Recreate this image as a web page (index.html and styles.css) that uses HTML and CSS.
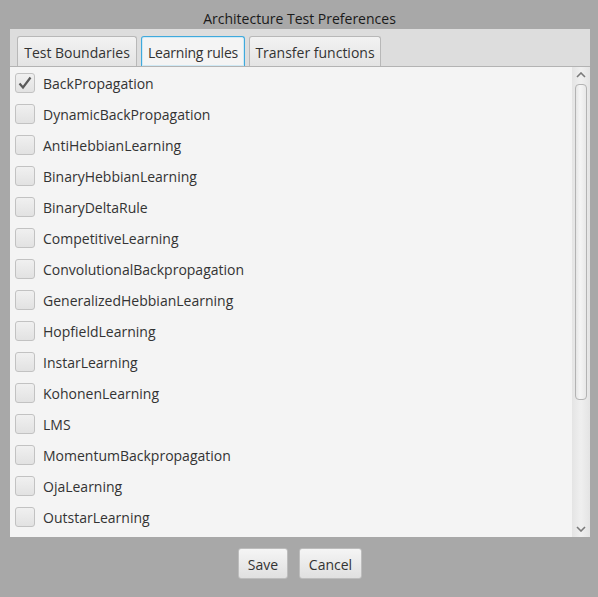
FILE: index.html
```html
<!DOCTYPE html>
<html>
<head>
<meta charset="utf-8">
<link rel="stylesheet" href="styles.css">
</head>
<body>
<div class="title">Architecture Test Preferences</div>
<div class="panel">
  <div class="tabbar">
    <div class="tab t1">Test Boundaries</div>
    <div class="tab t2 selected">Learning rules</div>
    <div class="tab t3">Transfer functions</div>
  </div>
  <div class="content">
    <div class="list">
      <div class="row"><span class="box checked"><svg width="20" height="20" viewBox="0 0 20 20"><path d="M4.5 10.5 L8 14.5 L15.5 4.5" fill="none" stroke="#5a5a5a" stroke-width="2.2" stroke-linejoin="miter"/></svg></span><span class="label">BackPropagation</span></div>
      <div class="row"><span class="box"></span><span class="label">DynamicBackPropagation</span></div>
      <div class="row"><span class="box"></span><span class="label">AntiHebbianLearning</span></div>
      <div class="row"><span class="box"></span><span class="label">BinaryHebbianLearning</span></div>
      <div class="row"><span class="box"></span><span class="label">BinaryDeltaRule</span></div>
      <div class="row"><span class="box"></span><span class="label">CompetitiveLearning</span></div>
      <div class="row"><span class="box"></span><span class="label">ConvolutionalBackpropagation</span></div>
      <div class="row"><span class="box"></span><span class="label">GeneralizedHebbianLearning</span></div>
      <div class="row"><span class="box"></span><span class="label">HopfieldLearning</span></div>
      <div class="row"><span class="box"></span><span class="label">InstarLearning</span></div>
      <div class="row"><span class="box"></span><span class="label">KohonenLearning</span></div>
      <div class="row"><span class="box"></span><span class="label">LMS</span></div>
      <div class="row"><span class="box"></span><span class="label">MomentumBackpropagation</span></div>
      <div class="row"><span class="box"></span><span class="label">OjaLearning</span></div>
      <div class="row"><span class="box"></span><span class="label">OutstarLearning</span></div>
    </div>
    <div class="scrollbar">
      <div class="arrow up"><svg width="10" height="6" viewBox="0 0 10 6"><path d="M1 5 L5 1 L9 5" fill="none" stroke="#7a7a7a" stroke-width="1.6"/></svg></div>
      <div class="track"><div class="thumb"></div></div>
      <div class="arrow down"><svg width="10" height="6" viewBox="0 0 10 6"><path d="M1 1 L5 5 L9 1" fill="none" stroke="#7a7a7a" stroke-width="1.6"/></svg></div>
    </div>
  </div>
</div>
<div class="buttons">
  <div class="btn save">Save</div>
  <div class="btn cancel">Cancel</div>
</div>
</body>
</html>
```
FILE: styles.css
```css
html, body {
  margin: 0;
  padding: 0;
}
body {
  background: #a8a8a8;
  width: 598px;
  height: 597px;
  font-family: "Open Sans", "Noto Sans", sans-serif;
  font-size: 14px;
  color: #333;
  overflow: hidden;
}
.title {
  box-sizing: border-box;
  height: 29px;
  padding-top: 9px;
  line-height: 20px;
  text-align: center;
  color: #1a1a1a;
  margin-left: 1px;
}
.panel {
  margin-left: 10px;
  width: 580px;
}
.tabbar {
  height: 38px;
  background: #dddddd;
  border-bottom: 1px solid #b3b3b3;
  box-sizing: border-box;
  display: flex;
  align-items: flex-end;
  padding-left: 7px;
  gap: 4px;
}
.tab {
  height: 30px;
  box-sizing: border-box;
  border: 1px solid #b8b8b8;
  border-bottom: none;
  border-radius: 3px 3px 0 0;
  background: linear-gradient(#f2f2f2, #e4e4e4);
  padding: 1px 0 0;
  line-height: 30px;
  text-align: center;
  white-space: nowrap;
  color: #333;
}
.t1 { width: 120px; }
.t2 { width: 104px; letter-spacing: -0.2px; }
.t3 { width: 132px; }
.tab.selected {
  background: #f4f4f4;
  border: 1px solid #3fa9dc;
  border-bottom: none;
  box-shadow: inset 0 0 0 1px #cfe9f5;
}
.content {
  height: 470px;
  background: #f4f4f4;
  display: flex;
}
.list {
  flex: 1;
  padding: 5px 0 0 5px;
  overflow: hidden;
}
.row {
  height: 31px;
  display: flex;
  align-items: flex-start;
}
.box {
  width: 20px;
  height: 20px;
  box-sizing: border-box;
  border: 1px solid #c2c2c2;
  border-radius: 3px;
  background: linear-gradient(#f0f0f0, #e2e2e2);
  margin-top: 1px;
  display: block;
  position: relative;
}
.box svg {
  position: absolute;
  left: -1px;
  top: -1px;
}
.label {
  margin-left: 8px;
  line-height: 24px;
  color: #333;
}
.scrollbar {
  width: 18px;
  background: linear-gradient(90deg, #e4e4e4, #efefef 50%, #e4e4e4);
  display: flex;
  flex-direction: column;
}
.arrow {
  height: 16px;
  display: flex;
  align-items: center;
  justify-content: center;
}
.track {
  flex: 1;
  padding: 0 3px;
}
.thumb {
  height: 316px;
  margin-top: 1px;
  box-sizing: border-box;
  border: 1px solid #b3b3b3;
  border-radius: 4px;
  background: linear-gradient(90deg, #e6e6e6, #f5f5f5 40%, #e8e8e8);
}
.buttons {
  display: flex;
  justify-content: center;
  gap: 11px;
  margin-top: 11px;
  padding-left: 2px;
}
.btn {
  height: 31px;
  box-sizing: border-box;
  border: 1px solid #bdbdbd;
  border-radius: 3px;
  background: linear-gradient(#f5f5f5, #e0e0e0);
  line-height: 30px;
  padding-top: 1px;
  text-align: center;
  color: #333;
}
.save { width: 50px; }
.cancel { width: 63px; }
```
